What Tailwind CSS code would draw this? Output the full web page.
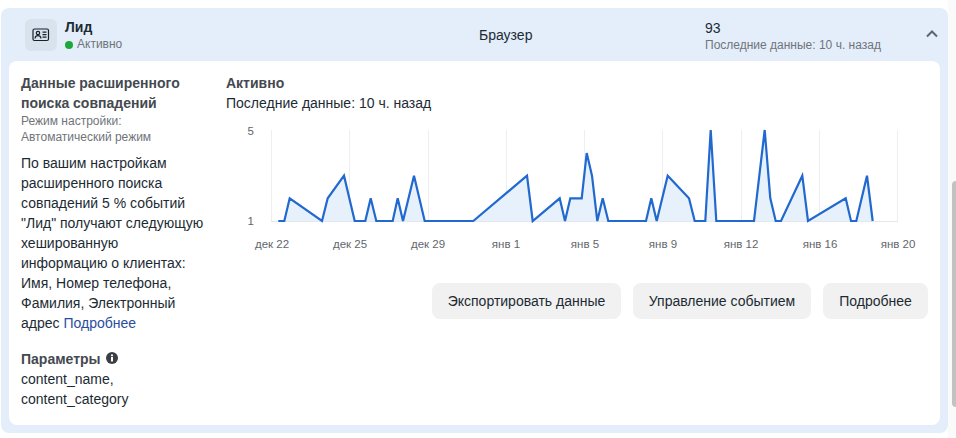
<!doctype html>
<html lang="en">
<head>
<meta charset="UTF-8">
<script src="https://cdn.jsdelivr.net/npm/@tailwindcss/browser@4"></script>
<title>Лид</title>
</head>
<body class="bg-white h-[438px] overflow-hidden font-['Liberation_Sans',Arial,sans-serif] text-[#1c2b33]">
<div class="flex h-[438px]">
  <div class="flex-1 min-w-0 pt-2 pb-[5px] pl-px">
    <div class="bg-[#e4eefb] rounded-lg h-[425px] flex flex-col px-2 pb-2">
      <!-- header -->
      <div class="h-[53px] flex items-center shrink-0">
        <div class="w-[32px] h-[32px] ml-[16px] mt-[1px] rounded-md bg-[#d9e3ee] flex items-center justify-center">
          <svg width="18" height="14" viewBox="0 0 18 14" fill="none" stroke="#14202a" stroke-width="1.200">
            <rect x="1" y="1" width="15.500" height="11.500" rx="1.500"/>
            <circle cx="6" cy="5" r="1.700"/>
            <path d="M3 10.500c.3-2 1.500-2.800 3-2.800s2.700.8 3 2.800"/>
            <path d="M10.500 4.200h4M10.500 6.700h4M10.500 9.200h4"/>
          </svg>
        </div>
        <div class="ml-[8px] w-[414px] shrink-0 pt-[2px]">
          <div class="text-[14px] leading-[18px] font-bold text-[#1c2b33]">Лид</div>
          <div class="flex items-center text-[12px] leading-[17px] text-[#6f7479]">
            <span class="w-[8px] h-[8px] rounded-full bg-[#1fa83a] mr-[4px]"></span>Активно
          </div>
        </div>
        <div class="w-[226px] shrink-0 text-[14px] text-[#1c2b33] pt-[2px]">Браузер</div>
        <div class="w-[221px] shrink-0 pt-[3px]">
          <div class="text-[14px] leading-[18px]">93</div>
          <div class="text-[12px] leading-[17px] text-[#6f7479]">Последние данные: 10 ч. назад</div>
        </div>
        <svg width="12" height="8" viewBox="0 0 12 8" fill="none" stroke="#5a6670" stroke-width="2" class="shrink-0 mt-[-1px]"><path d="M1 6.500l5-5 5 5"/></svg>
      </div>
      <!-- body -->
      <div class="bg-white rounded-lg flex-1 flex pl-[12px] pr-[12px] pt-[12px]">
        <div class="w-[205px] shrink-0">
          <div class="text-[14px] leading-[20px] font-bold text-[#444950]">Данные расширенного поиска совпадений</div>
          <div class="text-[12px] leading-[16px] text-[#6f7479] w-[150px]">Режим настройки: Автоматический режим</div>
          <p class="text-[14px] leading-[20px] text-[#1c2b33] mt-[8px] w-[184px]">По вашим настройкам расширенного поиска совпадений 5 % событий "Лид" получают следующую хешированную информацию о клиентах: Имя, Номер телефона, Фамилия, Электронный адрес <a class="text-[#2a4da0]">Подробнее</a></p>
          <div class="mt-[16px] flex items-center text-[14px] leading-[20px] font-bold text-[#444950]">Параметры
            <svg width="12" height="12" viewBox="0 0 12 12" class="ml-[5px] mt-[-2px]"><circle cx="6" cy="6" r="6" fill="#3a3f45"/><rect x="5" y="5" width="2" height="4.500" fill="#fff"/><rect x="5" y="2.500" width="2" height="1.700" fill="#fff"/></svg>
          </div>
          <div class="text-[14px] leading-[20px] text-[#1c2b33]">content_name,<br>content_category</div>
        </div>
        <div class="flex-1 min-w-0">
          <div class="text-[14px] leading-[20px] font-bold text-[#444950]">Активно</div>
          <div class="text-[14px] leading-[20px] text-[#1c2b33]">Последние данные: 10 ч. назад</div>
          <!-- chart -->
          <svg width="702" height="135" viewBox="226 118 702 135" class="block mt-[5px] font-['Liberation_Sans',Arial,sans-serif]">
            <g stroke="#eceef1" stroke-width="1">
              <path d="M271.500 130V221M349.500 130V221M428.500 130V221M506.500 130V221M584.500 130V221M662.500 130V221M741.500 130V221M819.500 130V221M897.500 130V221"/>
            </g>
            <path d="M271 221.500H898" stroke="#e3e7ee" stroke-width="1"/>
            <path fill="#e7f1fc" d="M278.300 221L284.300 221L289.700 198.300L322 221L327.700 198.300L344 175.700L354.700 221L365.300 221L370.700 198.300L376.300 221L392.700 221L397.700 198.300L403 221L414 175.700L424.700 221L473.300 221L527 175.700L532.700 221L559.700 198.300L565 221L570.300 198.300L581.700 198.300L586.700 153L592 175.700L597.300 221L602.700 198.300L608.300 221L646 221L651.300 198.300L656.700 221L667.700 175.700L689 198.300L694.700 221L705.300 221L710.700 130L716.300 221L754 221L764.700 130L770.300 198.300L775.700 221L781 221L802.300 175.700L808 221L845.700 198.300L851 221L856.300 221L867 175.700L872.700 221Z"/>
            <polyline fill="none" stroke="#2168cf" stroke-width="2.200" stroke-linejoin="miter" points="278.300,221 284.300,221 289.700,198.300 322,221 327.700,198.300 344,175.700 354.700,221 365.300,221 370.700,198.300 376.300,221 392.700,221 397.700,198.300 403,221 414,175.700 424.700,221 473.300,221 527,175.700 532.700,221 559.700,198.300 565,221 570.300,198.300 581.700,198.300 586.700,153 592,175.700 597.300,221 602.700,198.300 608.300,221 646,221 651.300,198.300 656.700,221 667.700,175.700 689,198.300 694.700,221 705.300,221 710.700,130 716.300,221 754,221 764.700,130 770.300,198.300 775.700,221 781,221 802.300,175.700 808,221 845.700,198.300 851,221 856.300,221 867,175.700 872.700,221"/>
            <g font-size="11.500" fill="#5f666d" text-anchor="end">
              <text x="254" y="135">5</text>
              <text x="254" y="225">1</text>
            </g>
            <g font-size="11.500" fill="#5f666d" text-anchor="middle">
              <text x="272" y="248">дек 22</text>
              <text x="350" y="248">дек 25</text>
              <text x="428" y="248">дек 29</text>
              <text x="506" y="248">янв 1</text>
              <text x="585" y="248">янв 5</text>
              <text x="663" y="248">янв 9</text>
              <text x="741" y="248">янв 12</text>
              <text x="820" y="248">янв 16</text>
              <text x="898" y="248">янв 20</text>
            </g>
          </svg>
          <div class="flex justify-end gap-[12px] mt-[30px]">
            <button class="h-[36px] w-[189px] rounded-lg bg-[#f1f1f1] text-[14px] text-[#1c2b33]">Экспортировать данные</button>
            <button class="h-[36px] w-[178px] rounded-lg bg-[#f1f1f1] text-[14px] text-[#1c2b33]">Управление событием</button>
            <button class="h-[36px] w-[105px] rounded-lg bg-[#f1f1f1] text-[14px] text-[#1c2b33]">Подробнее</button>
          </div>
        </div>
      </div>
    </div>
  </div>
  <!-- scrollbar -->
  <div class="w-[8px] shrink-0 bg-[#fafafa] relative">
    <div class="absolute left-[4px] top-[181px] h-[226px] w-[4px] rounded-l bg-[#c2c2c2]"></div>
  </div>
</div>
</body>
</html>
